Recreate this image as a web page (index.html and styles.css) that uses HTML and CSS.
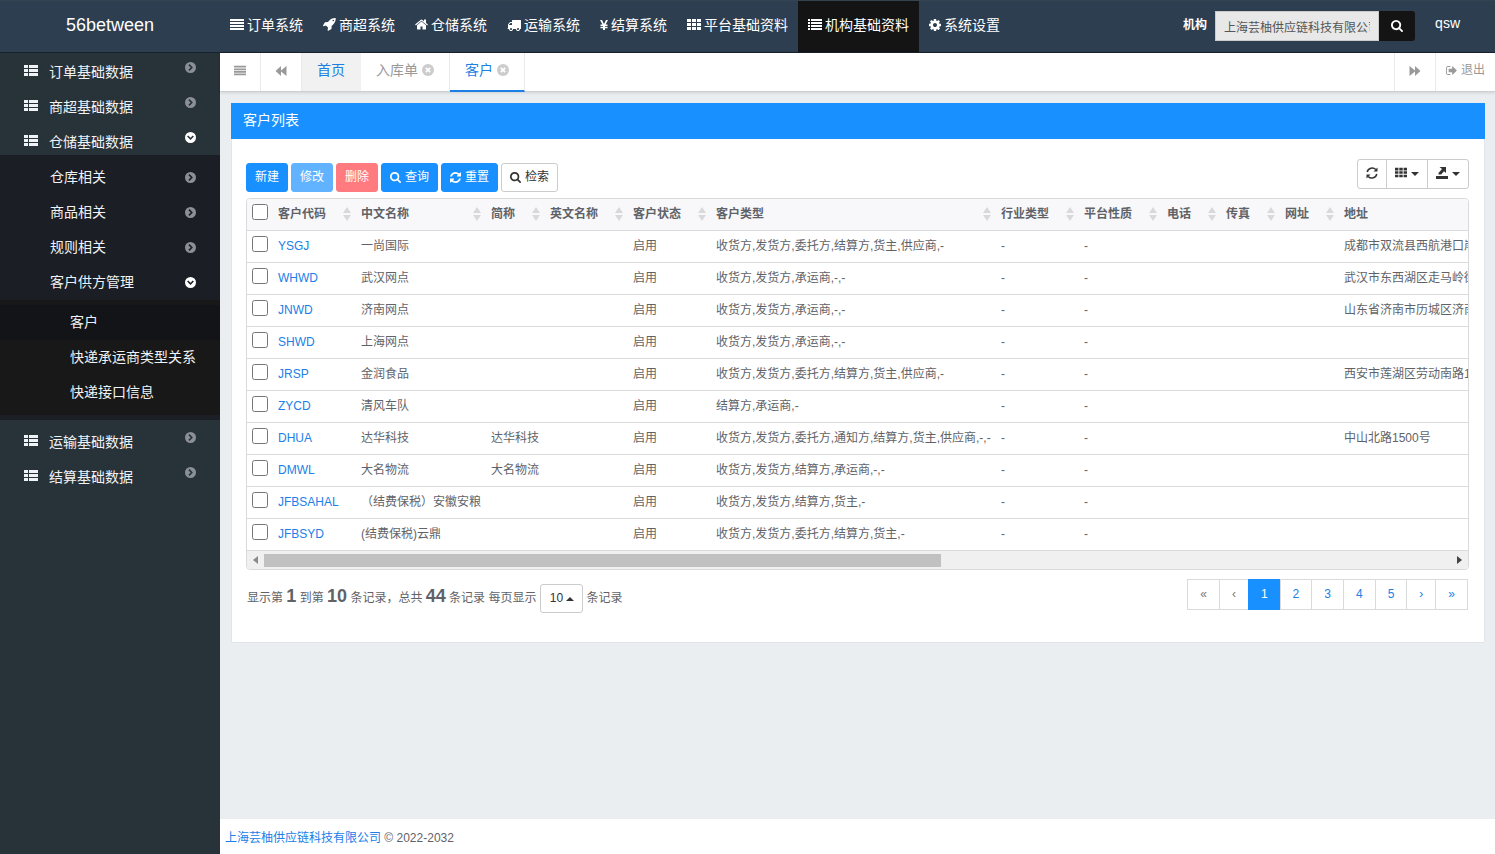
FILE: index.html
```html
<!DOCTYPE html>
<html lang="zh-CN">
<head>
<meta charset="utf-8">
<title>客户列表</title>
<link rel="stylesheet" href="styles.css">
</head>
<body>
<svg class="sprite" aria-hidden="true">
  <symbol id="i-justify" viewBox="0 0 14 14"><path d="M0 1h14v2H0zM0 4h14v2H0zM0 7h14v2H0zM0 10h14v2H0z"/></symbol>
  <symbol id="i-rocket" viewBox="64 128 1600 1664"><path d="M1440 448q0-40-28-68t-68-28-68 28-28 68 28 68 68 28 68-28 28-68zm224-288q0 249-75.500 430.500t-253.500 360.500q-81 80-195 176l-20 379q-2 16-16 26l-384 224q-7 4-16 4-12 0-23-9l-64-64q-13-14-8-32l85-276-281-281-276 85q-3 1-9 1-14 0-23-9l-64-64q-17-19-5-39l224-384q10-14 26-16l379-20q96-114 176-195 188-187 358-258t431-71q14 0 24 9.500t10 22.500z"/></symbol>
  <symbol id="i-home" viewBox="64 64 1664 1664"><path d="M1472 992v480q0 26-19 45t-45 19h-384v-384h-256v384h-384q-26 0-45-19t-19-45v-480q0-1 .5-3t.5-3l575-474 575 474q1 2 1 6zm223-69l-62 74q-8 9-21 11h-3q-13 0-21-7l-692-577-692 577q-12 8-24 7-13-2-21-11l-62-74q-8-10-7-23.500t11-21.500l719-599q32-26 76-26t76 26l244 204v-195q0-14 9-23t23-9h192q14 0 23 9t9 23v408l219 182q10 8 11 21.500t-7 23.500z"/></symbol>
  <symbol id="i-truck" viewBox="0 0 1792 1792"><path d="M640 1408q0-52-38-90t-90-38-90 38-38 90 38 90 90 38 90-38 38-90zm-384-512h384v-256h-158q-13 0-22 9l-195 195q-9 9-9 22v30zm1280 512q0-52-38-90t-90-38-90 38-38 90 38 90 90 38 90-38 38-90zm256-1088v1024q0 15-4 26.500t-13.500 18.500-16.500 11.500-23.500 6-22.500 2-25.500 0-22.500-.5q0 106-75 181t-181 75-181-75-75-181h-384q0 106-75 181t-181 75-181-75-75-181h-64q-3 0-22.500.5t-25.500 0-22.500-2-23.500-6-16.500-11.500-13.500-18.500-4-26.500q0-26 19-45t45-19v-320q0-8-.5-35t0-38 2.500-34.500 6.500-37 14-30.500 22.500-30l198-198q19-19 50.500-32t58.500-13h160v-192q0-26 19-45t45-19h1024q26 0 45 19t19 45z"/></symbol>
  <symbol id="i-yen" viewBox="0 0 8 14"><path d="M0 2h2l2 4 2-4h2L5.600 6.500H7.500V8H5v.8h2.500v1.400H5V12H3v-1.800H.5V8.800H3V8H.5V6.500h1.900z"/></symbol>
  <symbol id="i-th" viewBox="0 0 14 14"><path d="M0 1h4v3H0zM5 1h4v3H5zM10 1h4v3h-4zM0 5h4v3H0zM5 5h4v3H5zM10 5h4v3h-4zM0 9h4v3H0zM5 9h4v3H5zM10 9h4v3h-4z"/></symbol>
  <symbol id="i-list" viewBox="0 0 14 14"><path d="M0 1h2v2H0zM3 1h11v2H3zM0 4h2v2H0zM3 4h11v2H3zM0 7h2v2H0zM3 7h11v2H3zM0 10h2v2H0zM3 10h11v2H3z"/></symbol>
  <symbol id="i-thlist" viewBox="0 0 14 14"><path d="M0 1h4v3H0zM5 1h9v3H5zM0 5h4v3H0zM5 5h9v3H5zM0 9h4v3H0zM5 9h9v3H5z"/></symbol>
  <symbol id="i-cog" viewBox="128 128 1536 1536"><path d="M1152 896q0-106-75-181t-181-75-181 75-75 181 75 181 181 75 181-75 75-181zm512-109v222q0 12-8 23t-20 13l-185 28q-19 54-39 91 35 50 107 138 10 12 10 25t-9 23q-27 37-99 108t-94 71q-12 0-26-9l-138-108q-44 23-91 38-16 136-29 186-7 28-36 28h-222q-14 0-24.500-8.500t-11.500-21.500l-28-184q-49-16-90-37l-141 107q-10 9-25 9-14 0-25-11-126-114-165-168-7-10-7-23 0-12 8-23 15-21 51-66.500t54-70.500q-27-50-41-99l-183-27q-13-2-21-12.500t-8-23.500v-222q0-12 8-23t19-13l186-28q14-46 39-92-40-57-107-138-10-12-10-24 0-10 9-23 26-36 98.500-107.500t94.500-71.500q13 0 26 10l138 107q44-23 91-38 16-136 29-186 7-28 36-28h222q14 0 24.500 8.500t11.500 21.500l28 184q49 16 90 37l142-107q9-9 24-9 13 0 25 10 129 119 165 170 7 8 7 22 0 12-8 23-15 21-51 66.500t-54 70.500q26 50 41 98l183 28q13 2 21 12.500t8 23.500z"/></symbol>
  <symbol id="i-search" viewBox="64 128 1664 1664"><path d="M1216 832q0-185-131.500-316.500t-316.500-131.500-316.500 131.500-131.500 316.500 131.500 316.500 316.500 131.500 316.500-131.500 131.500-316.500zm512 832q0 52-38 90t-90 38q-54 0-90-38l-343-342q-179 124-399 124-143 0-273.500-55.500t-225-150-150-225-55.500-273.500 55.500-273.500 150-225 225-150 273.500-55.500 273.500 55.500 225 150 150 225 55.500 273.500q0 220-124 399l343 343q37 37 37 90z"/></symbol>
  <symbol id="i-refresh" viewBox="128 128 1536 1536"><path d="M1639 1056q0 5-1 7-64 268-268 434.500t-478 166.500q-146 0-282.500-55t-243.500-157l-129 129q-19 19-45 19t-45-19-19-45v-448q0-26 19-45t45-19h448q26 0 45 19t19 45-19 45l-137 137q71 66 161 102t187 36q134 0 250-65t186-179q11-17 53-117 8-23 30-23h192q13 0 22.500 9.500t9.500 22.500zm25-800v448q0 26-19 45t-45 19h-448q-26 0-45-19t-19-45 19-45l138-138q-148-137-349-137-134 0-250 65t-186 179q-11 17-53 117-8 23-30 23h-199q-13 0-22.500-9.500t-9.500-22.500v-7q65-268 270-434.500t480-166.500q146 0 284 55.500t245 156.500l130-129q19-19 45-19t45 19 19 45z"/></symbol>
  <symbol id="i-sync" viewBox="0 0 12 12"><path d="M1.200 5A5 5 0 0 1 9.800 2.600M10.800 7a5 5 0 0 1-8.600 2.400" fill="none" stroke="currentColor" stroke-width="1.500"/><path d="M11.500.5v4h-4zM.5 11.500v-4h4z"/></symbol>
  <symbol id="i-export" viewBox="0 0 12 12"><path d="M0 9h12v3H0zM3.500 0H10v6L8 4.300 5.200 7.500H2.500v-1.500L6 2z"/></symbol>
  <symbol id="i-signout" viewBox="64 128 1600 1536"><path d="M704 1440q0 4 1 20t.5 26.500-3 23.500-10 19.500-20.500 6.500h-320q-119 0-203.500-84.500t-84.500-203.500v-704q0-119 84.500-203.500t203.500-84.500h320q13 0 22.500 9.500t9.500 22.500q0 4 1 20t.5 26.500-3 23.500-10 19.500-20.500 6.500h-320q-66 0-113 47t-47 113v704q0 66 47 113t113 47h312l11.500 1 11.500 3 8 5.500 7 9 2 13.500zm928-544q0 26-19 45l-544 544q-19 19-45 19t-45-19-19-45v-288h-448q-26 0-45-19t-19-45v-384q0-26 19-45t45-19h448v-288q0-26 19-45t45-19 45 19l544 544q19 19 19 45z"/></symbol>
  <symbol id="i-back" viewBox="0 0 12 12"><path d="M6 1v4.500L11.500 1v10L6 6.500V11L.5 6z"/></symbol>
  <symbol id="i-forward" viewBox="0 0 12 12"><path d="M6 1v4.500L.5 1v10L6 6.500V11l5.500-5z"/></symbol>
  <symbol id="i-close" viewBox="0 0 12 12"><circle cx="6" cy="6" r="6"/><path d="M3.800 3.800l4.400 4.400M8.200 3.800L3.800 8.200" stroke="#fff" stroke-width="1.800"/></symbol>
  <symbol id="i-right" viewBox="0 0 12 12"><path fill-rule="evenodd" d="M6 0a6 6 0 1 1 0 12A6 6 0 0 1 6 0zM4.900 2.300L3.700 3.500 6.200 6 3.700 8.500l1.200 1.200L8.600 6z"/></symbol>
  <symbol id="i-down" viewBox="0 0 12 12"><path fill-rule="evenodd" d="M6 0a6 6 0 1 1 0 12A6 6 0 0 1 6 0zM2.300 4.900L6 8.600l3.700-3.700-1.200-1.200L6 6.200 3.500 3.700z"/></symbol>
  <symbol id="i-sort" viewBox="0 0 8 14"><path d="M4 0l4 6H0zM0 8h8l-4 6z"/></symbol>
</svg>

<header class="topbar">
  <a class="brand" href="#">56between</a>
  <nav class="topnav">
    <a href="#"><svg class="ic14"><use href="#i-justify"/></svg>订单系统</a>
    <a href="#"><svg class="ic13"><use href="#i-rocket"/></svg>商超系统</a>
    <a href="#"><svg class="ic13"><use href="#i-home"/></svg>仓储系统</a>
    <a href="#"><svg class="ic14"><use href="#i-truck"/></svg>运输系统</a>
    <a href="#"><svg class="ic8"><use href="#i-yen"/></svg>结算系统</a>
    <a href="#"><svg class="ic14"><use href="#i-th"/></svg>平台基础资料</a>
    <a class="on" href="#"><svg class="ic14"><use href="#i-list"/></svg>机构基础资料</a>
    <a href="#"><svg class="ic12"><use href="#i-cog"/></svg>系统设置</a>
  </nav>
  <form class="org">
    <label for="org">机构</label>
    <input id="org" type="text" value="上海芸柚供应链科技有限公司" readonly>
    <button type="button" aria-label="搜索"><svg class="ic12"><use href="#i-search"/></svg></button>
  </form>
  <a class="user" href="#">qsw</a>
</header>

<div class="shell">
  <aside class="side">
    <ul class="menu">
      <li><a href="#"><svg class="ic14"><use href="#i-thlist"/></svg><span>订单基础数据</span><svg class="arrow"><use href="#i-right"/></svg></a></li>
      <li><a href="#"><svg class="ic14"><use href="#i-thlist"/></svg><span>商超基础数据</span><svg class="arrow"><use href="#i-right"/></svg></a></li>
      <li><a href="#"><svg class="ic14"><use href="#i-thlist"/></svg><span>仓储基础数据</span><svg class="arrow open"><use href="#i-down"/></svg></a>
        <ul class="sub">
          <li><a href="#"><span>仓库相关</span><svg class="arrow"><use href="#i-right"/></svg></a></li>
          <li><a href="#"><span>商品相关</span><svg class="arrow"><use href="#i-right"/></svg></a></li>
          <li><a href="#"><span>规则相关</span><svg class="arrow"><use href="#i-right"/></svg></a></li>
          <li><a href="#"><span>客户供方管理</span><svg class="arrow open"><use href="#i-down"/></svg></a>
            <ul class="leaf">
              <li><a class="on" href="#"><span>客户</span></a></li>
              <li><a href="#"><span>快递承运商类型关系</span></a></li>
              <li><a href="#"><span>快递接口信息</span></a></li>
            </ul>
          </li>
        </ul>
      </li>
      <li><a href="#"><svg class="ic14"><use href="#i-thlist"/></svg><span>运输基础数据</span><svg class="arrow"><use href="#i-right"/></svg></a></li>
      <li><a href="#"><svg class="ic14"><use href="#i-thlist"/></svg><span>结算基础数据</span><svg class="arrow"><use href="#i-right"/></svg></a></li>
    </ul>
  </aside>

  <div class="page">
    <div class="tabs">
      <button class="tool" type="button" aria-label="菜单"><svg class="ic12"><use href="#i-justify"/></svg></button>
      <button class="tool" type="button" aria-label="向左"><svg class="ic12"><use href="#i-back"/></svg></button>
      <a class="tab home" href="#">首页</a>
      <a class="tab" href="#">入库单<svg class="ic12"><use href="#i-close"/></svg></a>
      <a class="tab on" href="#">客户<svg class="ic12"><use href="#i-close"/></svg></a>
      <button class="tool next" type="button" aria-label="向右"><svg class="ic12"><use href="#i-forward"/></svg></button>
      <a class="exit" href="#"><svg class="ic11"><use href="#i-signout"/></svg>退出</a>
    </div>

    <main class="content">
      <section class="panel">
        <h1>客户列表</h1>
        <div class="panel-body">
          <div class="toolbar">
            <div class="actions">
              <button class="btn blue" type="button">新建</button>
              <button class="btn blue" type="button" disabled>修改</button>
              <button class="btn red" type="button" disabled>删除</button>
              <button class="btn blue" type="button"><svg class="ic11"><use href="#i-search"/></svg>查询</button>
              <button class="btn blue" type="button"><svg class="ic11"><use href="#i-refresh"/></svg>重置</button>
              <button class="btn" type="button"><svg class="ic11"><use href="#i-search"/></svg>检索</button>
            </div>
            <div class="group">
              <button type="button" aria-label="刷新"><svg class="ic12"><use href="#i-sync"/></svg></button>
              <button type="button" aria-label="列"><svg class="ic12"><use href="#i-th"/></svg><i class="caret"></i></button>
              <button type="button" aria-label="导出"><svg class="ic12"><use href="#i-export"/></svg><i class="caret"></i></button>
            </div>
          </div>

          <div class="grid">
            <div class="grid-view">
              <table>
                <colgroup><col class="c26"><col class="c83"><col class="c130"><col class="c59"><col class="c83"><col class="c83"><col class="c285"><col class="c83"><col class="c83"><col class="c59"><col class="c59"><col class="c59"><col></colgroup>
                <thead><tr>
                  <th><input type="checkbox" aria-label="全选"></th>
                  <th><div>客户代码<svg><use href="#i-sort"/></svg></div></th>
                  <th><div>中文名称<svg><use href="#i-sort"/></svg></div></th>
                  <th><div>简称<svg><use href="#i-sort"/></svg></div></th>
                  <th><div>英文名称<svg><use href="#i-sort"/></svg></div></th>
                  <th><div>客户状态<svg><use href="#i-sort"/></svg></div></th>
                  <th><div>客户类型<svg><use href="#i-sort"/></svg></div></th>
                  <th><div>行业类型<svg><use href="#i-sort"/></svg></div></th>
                  <th><div>平台性质<svg><use href="#i-sort"/></svg></div></th>
                  <th><div>电话<svg><use href="#i-sort"/></svg></div></th>
                  <th><div>传真<svg><use href="#i-sort"/></svg></div></th>
                  <th><div>网址<svg><use href="#i-sort"/></svg></div></th>
                  <th>地址</th>
                </tr></thead>
                <tbody>
                  <tr><td><input type="checkbox" aria-label="YSGJ"></td><td><a href="#">YSGJ</a></td><td>一尚国际</td><td></td><td></td><td>启用</td><td>收货方,发货方,委托方,结算方,货主,供应商,-</td><td>-</td><td>-</td><td></td><td></td><td></td><td>成都市双流县西航港口岸</td></tr>
                  <tr><td><input type="checkbox" aria-label="WHWD"></td><td><a href="#">WHWD</a></td><td>武汉网点</td><td></td><td></td><td>启用</td><td>收货方,发货方,承运商,-,-</td><td>-</td><td>-</td><td></td><td></td><td></td><td>武汉市东西湖区走马岭街</td></tr>
                  <tr><td><input type="checkbox" aria-label="JNWD"></td><td><a href="#">JNWD</a></td><td>济南网点</td><td></td><td></td><td>启用</td><td>收货方,发货方,承运商,-,-</td><td>-</td><td>-</td><td></td><td></td><td></td><td>山东省济南市历城区济南</td></tr>
                  <tr><td><input type="checkbox" aria-label="SHWD"></td><td><a href="#">SHWD</a></td><td>上海网点</td><td></td><td></td><td>启用</td><td>收货方,发货方,承运商,-,-</td><td>-</td><td>-</td><td></td><td></td><td></td><td></td></tr>
                  <tr><td><input type="checkbox" aria-label="JRSP"></td><td><a href="#">JRSP</a></td><td>金润食品</td><td></td><td></td><td>启用</td><td>收货方,发货方,委托方,结算方,货主,供应商,-</td><td>-</td><td>-</td><td></td><td></td><td></td><td>西安市莲湖区劳动南路1</td></tr>
                  <tr><td><input type="checkbox" aria-label="ZYCD"></td><td><a href="#">ZYCD</a></td><td>清风车队</td><td></td><td></td><td>启用</td><td>结算方,承运商,-</td><td>-</td><td>-</td><td></td><td></td><td></td><td></td></tr>
                  <tr><td><input type="checkbox" aria-label="DHUA"></td><td><a href="#">DHUA</a></td><td>达华科技</td><td>达华科技</td><td></td><td>启用</td><td>收货方,发货方,委托方,通知方,结算方,货主,供应商,-,-</td><td>-</td><td>-</td><td></td><td></td><td></td><td>中山北路1500号</td></tr>
                  <tr><td><input type="checkbox" aria-label="DMWL"></td><td><a href="#">DMWL</a></td><td>大名物流</td><td>大名物流</td><td></td><td>启用</td><td>收货方,发货方,结算方,承运商,-,-</td><td>-</td><td>-</td><td></td><td></td><td></td><td></td></tr>
                  <tr><td><input type="checkbox" aria-label="JFBSAHAL"></td><td><a href="#">JFBSAHAL</a></td><td>（结费保税）安徽安粮</td><td></td><td></td><td>启用</td><td>收货方,发货方,结算方,货主,-</td><td>-</td><td>-</td><td></td><td></td><td></td><td></td></tr>
                  <tr><td><input type="checkbox" aria-label="JFBSYD"></td><td><a href="#">JFBSYD</a></td><td>(结费保税)云鼎</td><td></td><td></td><td>启用</td><td>收货方,发货方,委托方,结算方,货主,-</td><td>-</td><td>-</td><td></td><td></td><td></td><td></td></tr>
                </tbody>
              </table>
            </div>
            <div class="hscroll" aria-hidden="true">
              <i class="tri left"></i>
              <div class="track"><div class="thumb"></div></div>
              <i class="tri right"></i>
            </div>
          </div>

          <div class="pager">
            <div class="info">显示第 <b>1</b> 到第 <b>10</b> 条记录，总共 <b>44</b> 条记录 每页显示 <button class="size" type="button">10<i class="caret up"></i></button> 条记录</div>
            <nav class="pages">
              <a class="off" href="#">«</a><a class="off" href="#">‹</a><a class="on" href="#">1</a><a href="#">2</a><a href="#">3</a><a href="#">4</a><a href="#">5</a><a href="#">›</a><a href="#">»</a>
            </nav>
          </div>
        </div>
      </section>
    </main>

    <footer class="foot"><a href="#">上海芸柚供应链科技有限公司</a> © 2022-2032</footer>
  </div>
</div>
</body>
</html>
```
FILE: styles.css
```css
* { box-sizing: border-box; }
body {
  margin: 0;
  min-height: 100vh;
  display: flex;
  flex-direction: column;
  font: 12px/20px "Liberation Sans", "Noto Sans CJK SC", sans-serif;
  color: #5f6368;
  background: #ebeef0;
}
a { color: inherit; text-decoration: none; }
ul { list-style: none; margin: 0; padding: 0; }
button, input { font: inherit; color: inherit; }
button { cursor: pointer; }
svg { fill: currentColor; flex: none; }
.sprite { display: none; }
.ic8 { width: 8px; height: 14px; }
.ic11 { width: 11px; height: 11px; }
.ic12 { width: 12px; height: 12px; }
.ic13 { width: 13px; height: 13px; }
.ic14 { width: 14px; height: 14px; }

/* Top bar */
.topbar {
  display: flex;
  height: 53px;
  background: #2d3e50;
  border-top: 1px solid #34434f;
  border-bottom: 1px solid #17222e;
  color: #fff;
}
.brand { width: 220px; font-size: 18px; line-height: 48px; text-align: center; }
.topnav { display: flex; flex: 1; font-size: 14px; }
.topnav a { display: flex; align-items: center; gap: 3px; padding: 0 10px 4px; white-space: nowrap; }
.topnav .on { background: #141414; }
.org { display: flex; align-items: center; padding-bottom: 1px; }
.org label { font-weight: bold; margin-right: 8px; padding-bottom: 3px; }
.org input {
  width: 164px;
  height: 30px;
  padding: 0 8px;
  border: 1px solid #ccc;
  border-radius: 0;
  background: #e8e8e8;
  color: #555;
  outline: 0;
}
.org button {
  display: grid;
  place-items: center;
  width: 36px;
  height: 30px;
  padding: 0;
  border: 0;
  border-radius: 0 3px 3px 0;
  background: #141414;
  color: #fff;
}
.user { padding: 0 35px 0 20px; font-size: 14px; line-height: 45px; }

/* Side menu */
.shell { display: flex; flex: 1; }
.side { width: 220px; flex: none; background: #283239; color: #f0f3f5; font-size: 14px; }
.menu { margin-top: -3px; }
.menu a { display: flex; align-items: center; height: 35px; padding: 0 24px; }
.menu a span { flex: 1; }
.menu > li > a > span { padding: 8px 0 0 11px; }
.menu > li > a > .ic14 { margin-top: 7px; }
.arrow { width: 11px; height: 11px; color: #8b9096; }
.arrow.open { color: #fff; }
.menu .sub { padding: 5px 0; background: #1b1e24; }
.menu .sub a { padding-left: 50px; }
.menu .sub span { padding-bottom: 2px; }
.menu .leaf { padding: 5px 0; background: #181818; }
.menu .leaf a { padding: 0 0 0 70px; }
.menu .leaf .on { background: #131417; }

/* Tabs */
.page { display: flex; flex-direction: column; flex: 1; min-width: 0; }
.tabs {
  display: flex;
  height: 39px;
  background: #fff;
  border-bottom: 1px solid #ccd0d2;
  box-shadow: 0 1px 3px rgba(0, 0, 0, .12);
  color: #999;
  font-size: 14px;
}
.tool {
  width: 41px;
  padding: 0 0 2px;
  display: grid;
  place-items: center;
  border: 0;
  border-right: 1px solid #e8eaec;
  background: none;
}
.tab {
  display: flex;
  align-items: center;
  gap: 4px;
  padding: 0 15px 4px;
  border-right: 1px solid #e8eaec;
}
.tab svg { color: #ccc; }
.tab.home { background: #f1f1f1; color: #1b7fe3; padding: 0 16px 4px 15px; border: 0; }
.tab.on { color: #1b7fe3; padding-bottom: 3px; border-bottom: 2px solid #1b7fe3; margin-bottom: -1px; }
.tool.next { margin-left: auto; width: 42px; border-left: 1px solid #e8eaec; }
.exit { display: flex; align-items: center; gap: 4px; padding: 0 10px 4px; font-size: 12px; }

/* Panel */
.content { flex: 1; padding: 11px 10px 20px 11px; }
.panel { background: #fff; border: 1px solid #e1e4e8; border-top: 0; border-radius: 0 0 2px 2px; }
.panel h1 {
  margin: 0 -1px;
  height: 36px;
  padding-left: 12px;
  background: #1890ff;
  color: #fff;
  font-size: 14px;
  font-weight: normal;
  line-height: 34px;
}
.panel-body { padding: 20px 15px 29px 14px; }
.toolbar { display: flex; justify-content: space-between; align-items: flex-start; margin-bottom: 9px; height: 30px; }
.actions { display: flex; gap: 3px; padding-top: 4px; }
.btn {
  display: flex;
  align-items: center;
  gap: 4px;
  height: 29px;
  padding: 0 8px 1px;
  border: 1px solid #ccc;
  border-radius: 3px;
  background: #fff;
  color: #333;
}
.btn.blue { background: #1890ff; border-color: #1890ff; color: #fff; }
.btn.red { background: #ff3d44; border-color: #ff3d44; color: #fff; }
.btn:disabled { opacity: .68; }
.group { display: flex; border: 1px solid #ccc; border-radius: 3px; }
.group button {
  display: flex;
  align-items: center;
  gap: 4px;
  height: 28px;
  padding: 0 8px 2px;
  border: 0;
  border-left: 1px solid #ccc;
  background: none;
  color: #333;
}
.group button:first-child { border-left: 0; }
.caret { border: 4px solid transparent; border-top-color: currentColor; border-bottom: 0; margin-top: 2px; }
.caret.up { border-top: 0; border-bottom: 4px solid currentColor; margin-top: 0; }

/* Data grid */
.grid { border: 1px solid #d9dadc; border-radius: 4px; overflow: hidden; }
.grid-view { overflow: hidden; }
table { width: 2135px; table-layout: fixed; border-collapse: separate; border-spacing: 0; }
.c26 { width: 26px; }
.c59 { width: 59px; }
.c83 { width: 83px; }
.c130 { width: 130px; }
.c285 { width: 285px; }
th, td {
  height: 32px;
  padding: 0 5px 1px;
  border-bottom: 1px solid #d9dadc;
  text-align: left;
  white-space: nowrap;
}
th { background: #f8f8fa; }
th div { display: flex; align-items: center; justify-content: space-between; }
th svg { width: 8px; height: 14px; color: #d8d9dc; }
td a { color: #2080e8; }
input[type="checkbox"] { display: block; width: 16px; height: 16px; margin: 0 0 4px; }
.hscroll { display: flex; align-items: center; height: 18px; background: #f0f0f0; }
.track { flex: 1; }
.thumb { width: 57%; height: 13px; background: #c1c1c1; }
.tri { margin: 0 6px; border: 4px solid transparent; }
.tri.left { border-left: 0; border-right: 5px solid #8a8a8a; }
.tri.right { border-right: 0; border-left: 5px solid #444; }

/* Pagination */
.pager { display: flex; justify-content: space-between; align-items: flex-start; padding: 9px 1px 0; }
.info { padding-top: 3px; line-height: 29px; }
.info b { font-size: 18px; }
.size {
  display: inline-flex;
  align-items: center;
  gap: 3px;
  height: 29px;
  padding: 0 8px 0 9px;
  border: 1px solid #ccc;
  border-radius: 3px;
  background: #fff;
  color: #333;
}
.pages { display: flex; padding-left: 1px; }
.pages a {
  height: 31px;
  margin-left: -1px;
  padding: 0 12px;
  border: 1px solid #d9dadc;
  line-height: 28px;
  color: #2080e8;
}
.pages .off { color: #777; }
.pages .on { background: #1890ff; border-color: #1890ff; color: #fff; }

.foot { height: 35px; padding: 1px 0 0 5px; background: #fff; line-height: 36px; }
.foot a { color: #2080e8; }
```
